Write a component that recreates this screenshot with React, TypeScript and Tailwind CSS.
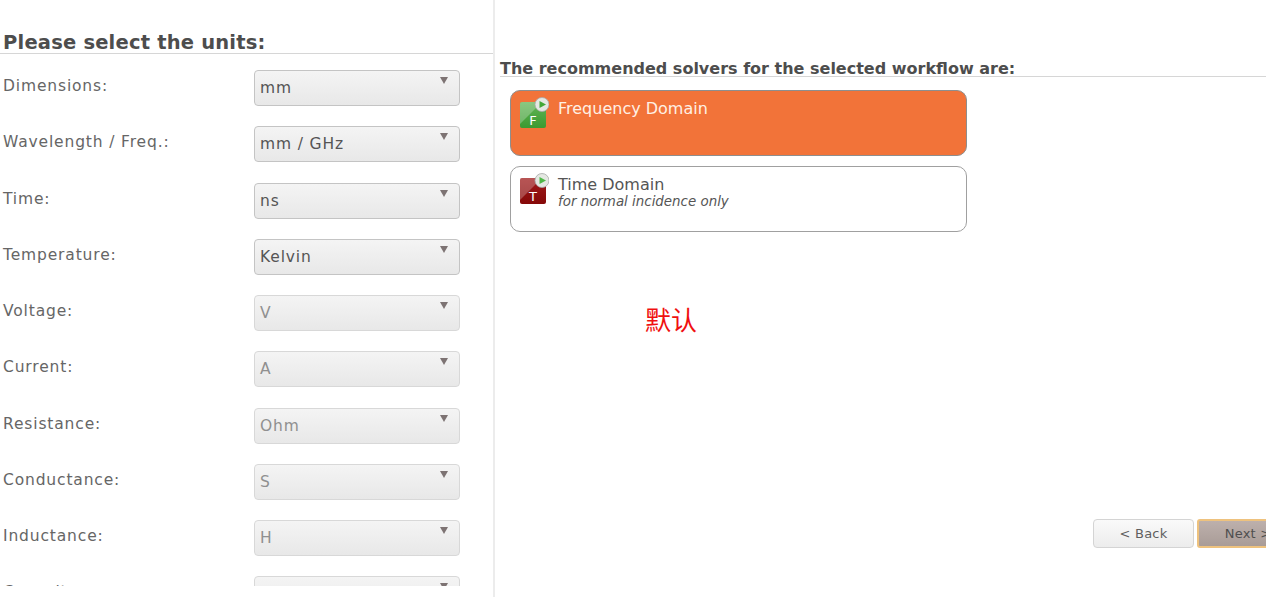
const units = [
    { label: 'Dimensions:', value: 'mm', enabled: true },
    { label: 'Wavelength / Freq.:', value: 'mm / GHz', enabled: true },
    { label: 'Time:', value: 'ns', enabled: true },
    { label: 'Temperature:', value: 'Kelvin', enabled: true },
    { label: 'Voltage:', value: 'V', enabled: false },
    { label: 'Current:', value: 'A', enabled: false },
    { label: 'Resistance:', value: 'Ohm', enabled: false },
    { label: 'Conductance:', value: 'S', enabled: false },
    { label: 'Inductance:', value: 'H', enabled: false },
    { label: 'Capacitance:', value: 'F', enabled: false },
];

const UnitRow = ({ label, value, enabled }: { label: string; value: string; enabled: boolean }) => (
    <div className="flex items-start shrink-0 h-[36px]">
        <div className="w-[254px] pl-[3px] pt-[6px] text-[15.5px] leading-[20px] text-[#666666] tracking-[0.85px]">{label}</div>
        <div
            className={`relative w-[206px] h-[36px] rounded-[4px] border bg-gradient-to-b from-[#f4f4f4] to-[#e8e8e8] pl-[5px] pt-[7px] text-[15.5px] leading-[20px] tracking-[0.85px] ${
                enabled ? 'border-[#c4c4c4] text-[#555555]' : 'border-[#d8d8d8] text-[#909090]'
            }`}
        >
            {value}
            <span className="absolute right-[11px] top-[6px] w-0 h-0 border-x-[4.5px] border-x-transparent border-t-[7px] border-t-[#7d7373]" />
        </div>
    </div>
);

const SolverIcon = ({ letter, from, to, play }: { letter: string; from: string; to: string; play: string }) => (
    <svg width="32" height="32" viewBox="0 0 32 32" className="shrink-0">
        <defs>
            <linearGradient id={`solver-${letter}`} x1="0" y1="0" x2="0" y2="1">
                <stop offset="0" stopColor={from} />
                <stop offset="1" stopColor={to} />
            </linearGradient>
        </defs>
        <rect x="3" y="5" width="26" height="26" rx="2" fill={`url(#solver-${letter})`} />
        <path d="M3 27 L3 7 Q3 5 5 5 L25 5 Z" fill="#ffffff" fillOpacity="0.25" />
        <text x="16" y="28" textAnchor="middle" fontSize="13" fill="#ffffff" fontFamily="'DejaVu Sans', sans-serif">
            {letter}
        </text>
        <circle cx="25" cy="7.5" r="7" fill="#e4e8e2" stroke="#a8a8a8" strokeWidth="0.8" />
        <path d="M22.5 4 L29 7.5 L22.5 11 Z" fill={play} />
    </svg>
);

const App = () => {
    return (
        <div className="w-[1266px] h-[597px] overflow-hidden flex bg-white font-['DejaVu_Sans','Noto_Sans_CJK_SC',sans-serif]">
            <aside className="w-[493px] h-[586px] shrink-0 overflow-hidden">
                <h2 className="mt-[30px] pl-[3px] h-[24px] border-b border-[#d6d6d6] text-[19.5px] leading-[26px] tracking-[0.2px] font-bold text-[#4d4d4d]">
                    Please select the units:
                </h2>
                <div className="mt-[16px] flex flex-col gap-[20.25px]">
                    {units.map((u) => (
                        <UnitRow key={u.label} {...u} />
                    ))}
                </div>
            </aside>
            <div className="w-[2px] h-full shrink-0 bg-[#ececec]" />
            <main className="flex-1 min-w-0 h-full flex flex-col pl-[5px]">
                <h3 className="mt-[58px] h-[19px] border-b border-[#d6d6d6] text-[16px] leading-[21px] font-bold text-[#4d4d4d]">
                    The recommended solvers for the selected workflow are:
                </h3>
                <div className="mt-[13px] ml-[10px] w-[457px] flex flex-col gap-[10px]">
                    <div className="h-[66px] rounded-[10px] border border-[#8e8e8e] bg-[#f27339] flex pl-[6px] pt-[6px] gap-[9px]">
                        <SolverIcon letter="F" from="#62b556" to="#3c9a31" play="#43a838" />
                        <div className="mt-[2px] text-[16px] leading-[20px] text-[#fff0e4]">Frequency Domain</div>
                    </div>
                    <div className="h-[66px] rounded-[10px] border border-[#a0a0a0] bg-white flex pl-[6px] pt-[6px] gap-[9px]">
                        <SolverIcon letter="T" from="#a01c1c" to="#850808" play="#4fb848" />
                        <div className="mt-[2px]">
                            <div className="text-[16px] leading-[20px] text-[#555555]">Time Domain</div>
                            <div className="text-[13.4px] leading-[14px] italic text-[#555555]">for normal incidence only</div>
                        </div>
                    </div>
                </div>
                <div className="mt-[71px] ml-[145px] text-[26px] leading-[36px] text-[#f01010]">默认</div>
                <div className="mt-[180px] ml-[593px] flex gap-[3px]">
                    <button className="w-[101px] h-[29px] shrink-0 rounded-[4px] border border-[#d4d4d4] bg-gradient-to-b from-[#fafafa] to-[#ececec] pt-[1px] text-[13px] tracking-[0.2px] text-[#5f5f5f]">
                        &lt; Back
                    </button>
                    <button className="w-[102px] h-[29px] shrink-0 rounded-[3px] border-2 border-[#eec27e] bg-gradient-to-b from-[#bdb0ac] to-[#a99c97] pt-[1px] text-[13px] tracking-[0.2px] text-[#4f4f4f]">
                        Next &gt;
                    </button>
                </div>
            </main>
        </div>
    );
};

export default App;
